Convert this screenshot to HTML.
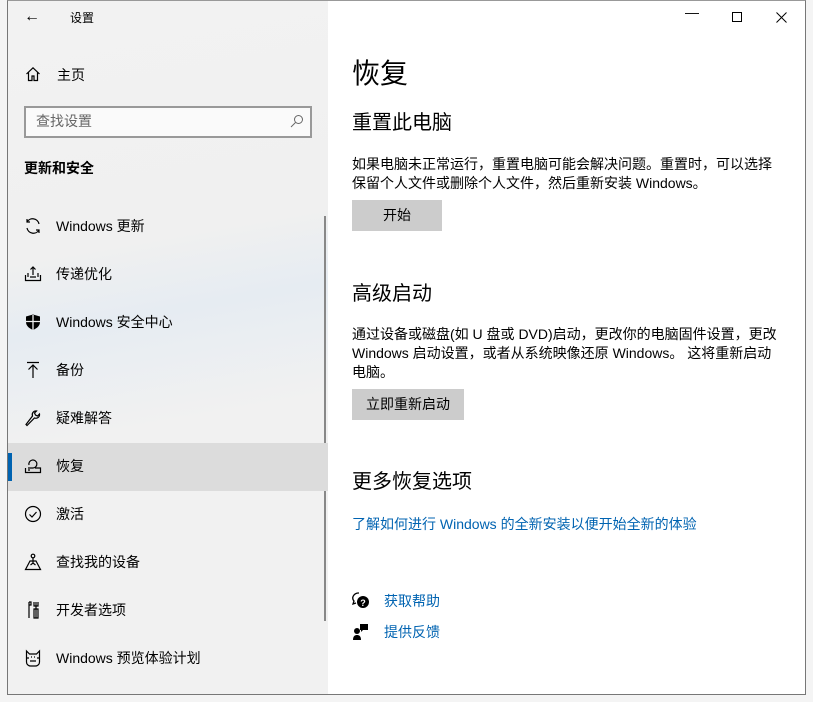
<!DOCTYPE html>
<html><head><meta charset="utf-8"><style>
*{margin:0;padding:0;box-sizing:border-box}
body{width:813px;height:702px;background:#f4f4f4;position:relative;overflow:hidden;font-family:"Liberation Sans","Noto Sans CJK SC",sans-serif;color:#000}
.win{position:absolute;left:7px;top:0;width:799px;height:695px;border:1px solid #777;border-top-color:#999;background:#fff;overflow:hidden}
.side{position:absolute;left:0;top:0;width:320px;height:100%;background:linear-gradient(170deg,#f2f2f2 0%,#f0f0f0 35%,#e6ecf2 45%,#f1f1f1 60%,#f1f1f1 100%)}
.t{position:absolute;white-space:nowrap}
.item{position:absolute;left:0;width:320px;height:48px;font-size:14px}
.item .ic{position:absolute;left:16px;top:14px;width:18px;height:18px}
.item span{position:absolute;left:48px;top:13px;line-height:20px}
.sel{background:#dcdcdc}
.sel:before{content:"";position:absolute;left:0;top:10px;width:4px;height:28px;background:#0063b1}
.main{position:absolute;left:344px}
.btn{position:absolute;background:#cccccc;font-size:14px;text-align:center;line-height:31px}
.p{font-size:14px;line-height:19px;color:#000}
.link{color:#0063b1;font-size:14px}
</style></head><body>
<div class="win">
<div class="side">
 <div class="t" style="left:16px;top:7px;font-size:16px">&#8592;</div>
 <div class="t" style="left:62px;top:8px;font-size:12px">设置</div>
 <svg class="t" style="left:17px;top:65px" width="16" height="16" viewBox="0 0 16 16" fill="none" stroke="#000" stroke-width="1.2"><path d="M1.5 8L8 1.8 14.5 8M3.5 6.2V14.5h3.5V10h2v4.5h3.5V6.2"/></svg>
 <div class="t" style="left:49px;top:64px;font-size:14px">主页</div>
 <div class="t" style="left:16px;top:105px;width:288px;height:32px;border:2px solid #999;background:#fafafa"></div>
 <div class="t" style="left:28px;top:110px;font-size:14px;color:#666">查找设置</div>
 <svg class="t" style="left:282px;top:113px" width="14" height="14" viewBox="0 0 14 14" fill="none" stroke="#666" stroke-width="1"><circle cx="8.5" cy="5.5" r="4"/><path d="M5.5 8.5L1 13"/></svg>
 <div class="t" style="left:16px;top:157px;font-size:14px;font-weight:bold">更新和安全</div>
 <div class="t" style="left:316px;top:215px;width:2px;height:405px;background:#888"></div>

 <div class="item" style="top:202px"><svg class="ic" viewBox="0 0 18 18" fill="none" stroke="#000" stroke-width="1.2"><path d="M15 7A6.5 6.5 0 0 0 3 5M3 11a6.5 6.5 0 0 0 12 2M3 2v3h3M15 16v-3h-3"/></svg><span>Windows 更新</span></div>
 <div class="item" style="top:250px"><svg class="ic" viewBox="0 0 18 18" fill="none" stroke="#000" stroke-width="1.2"><path d="M1.5 10v5.5h15V10M6 12h6M9 2v8M6.5 4.5L9 2l2.5 2.5M4 8v4M14 8v4"/></svg><span>传递优化</span></div>
 <div class="item" style="top:298px"><svg class="ic" viewBox="0 0 18 18"><path d="M9 1.5L16 3.5V9c0 4-3.5 6.5-7 8-3.5-1.5-7-4-7-8V3.5z" fill="#000"/><path d="M9 2v15M2 8.5h14" stroke="#f0f0f0" stroke-width="1.3"/></svg><span>Windows 安全中心</span></div>
 <div class="item" style="top:346px"><svg class="ic" viewBox="0 0 18 18" fill="none" stroke="#000" stroke-width="1.2"><path d="M3 1.5h12M9 4v13M4.5 8.5L9 4l4.5 4.5"/></svg><span>备份</span></div>
 <div class="item" style="top:394px"><svg class="ic" viewBox="0 0 18 18" fill="none" stroke="#000" stroke-width="1.2"><path d="M2 15.5l1 1 7.5-7.5c2.5 1 5.5-1 5-4l-2 2-2-1-1-2 2-2c-3-.5-5 2.5-4 5z"/></svg><span>疑难解答</span></div>
 <div class="item sel" style="top:442px"><svg class="ic" viewBox="0 0 18 18" fill="none" stroke="#000" stroke-width="1.2"><path d="M1.5 11v4.5h15V11H11M5 8a4 4 0 1 1 4 3H4M6 13h-2"/></svg><span>恢复</span></div>
 <div class="item" style="top:490px"><svg class="ic" viewBox="0 0 18 18" fill="none" stroke="#000" stroke-width="1.2"><circle cx="9" cy="9" r="7.5"/><path d="M5.5 9.5l2.5 2.5 4.5-5"/></svg><span>激活</span></div>
 <div class="item" style="top:538px"><svg class="ic" viewBox="0 0 18 18" fill="none" stroke="#000" stroke-width="1.2"><circle cx="9" cy="3" r="1.8"/><path d="M9 5v5M1.5 16.5L6 8h6l4.5 8.5zM6.5 12L9 10l2.5 2"/></svg><span>查找我的设备</span></div>
 <div class="item" style="top:586px"><svg class="ic" viewBox="0 0 18 18" fill="none" stroke="#000" stroke-width="1.2"><path d="M5 1v16M5 1h2v3H5M12 1v4M10 1v4h4V1M12 5v12M10 8h4v9h-4z"/></svg><span>开发者选项</span></div>
 <div class="item" style="top:634px"><svg class="ic" viewBox="0 0 18 18" fill="none" stroke="#000" stroke-width="1.2"><path d="M2.5 2l3 3h7l3-3v11a4 4 0 0 1-4 4h-5a4 4 0 0 1-4-4zM2 9h3M13 9h3M6 12h6M7 8h1M10 8h1"/></svg><span>Windows 预览体验计划</span></div>
</div>

<div class="t" style="left:677px;top:3px;font-size:14px">&#8212;</div>
<div class="t" style="left:724px;top:11px;width:10px;height:10px;border:1px solid #000"></div>
<svg class="t" style="left:768px;top:11px" width="11" height="11" viewBox="0 0 11 11" stroke="#000" stroke-width="1"><path d="M0.5 0.5l10 10M10.5 0.5l-10 10"/></svg>

<div class="t main" style="top:51px;font-size:28px">恢复</div>
<div class="t main" style="top:105px;font-size:20px">重置此电脑</div>
<div class="t main p" style="top:154px">如果电脑未正常运行，重置电脑可能会解决问题。重置时，可以选择<br>保留个人文件或删除个人文件，然后重新安装 Windows。</div>
<div class="btn" style="left:344px;top:199px;width:90px;height:31px">开始</div>
<div class="t main" style="top:276px;font-size:20px">高级启动</div>
<div class="t main p" style="top:324px">通过设备或磁盘(如 U 盘或 DVD)启动，更改你的电脑固件设置，更改<br>Windows 启动设置，或者从系统映像还原 Windows。 这将重新启动<br>电脑。</div>
<div class="btn" style="left:344px;top:388px;width:112px;height:31px">立即重新启动</div>
<div class="t main" style="top:464px;font-size:20px">更多恢复选项</div>
<div class="t main link" style="top:513px">了解如何进行 Windows 的全新安装以便开始全新的体验</div>
<svg class="t" style="left:344px;top:591px" width="18" height="18" viewBox="0 0 18 18"><path d="M7 1a6 5 0 0 0-5 8l-1 3 3-1" fill="none" stroke="#000" stroke-width="1.3"/><circle cx="11" cy="10" r="6" fill="#000"/><text x="11" y="14" font-size="9" fill="#fff" text-anchor="middle" font-family="Liberation Sans" font-weight="bold">?</text></svg>
<div class="t link" style="left:376px;top:590px">获取帮助</div>
<svg class="t" style="left:345px;top:622px" width="16" height="18" viewBox="0 0 16 18"><circle cx="4" cy="8" r="3" fill="#000"/><path d="M0 17c0-4 2-5 4-5s4 1 4 5z" fill="#000"/><path d="M7 1h8v6H10l-2 2V7H7z" fill="#000"/></svg>
<div class="t link" style="left:376px;top:621px">提供反馈</div>
</div>
</body></html>
